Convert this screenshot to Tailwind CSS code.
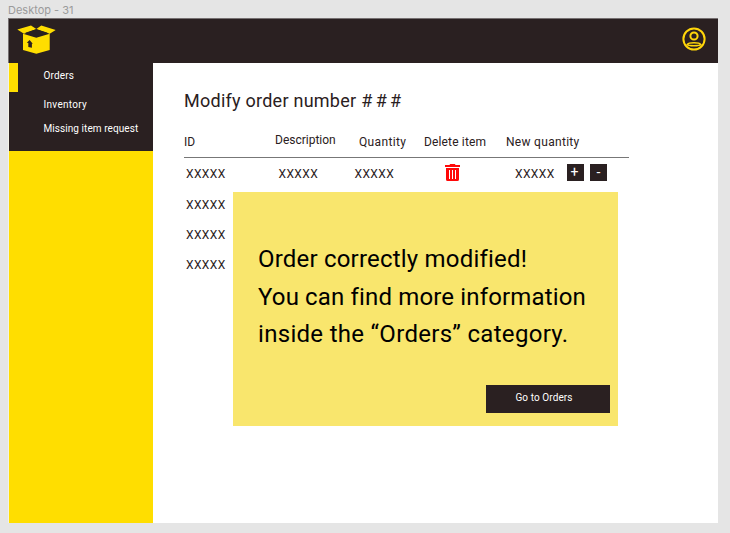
<!DOCTYPE html>
<html lang="en">
<head>
<meta charset="utf-8">
<title>Modify order</title>
<script src="https://cdn.jsdelivr.net/npm/@tailwindcss/browser@4"></script>
</head>
<body class="w-[730px] h-[533px] overflow-hidden bg-[#e5e5e5] pl-[8px] font-['Roboto','Liberation_Sans',sans-serif] text-[#2a2021]">
<div class="h-[18px] pt-[3px] text-[11px] leading-[14px] text-[#9b9b9b] font-['Inter',sans-serif]">Desktop - 31</div>
<div class="relative w-[710px] h-[505px] bg-white flex flex-col">
  <header class="h-[45px] shrink-0 bg-[#2a2021] border-t border-l border-[#767071] flex items-start justify-between pl-[8px] pr-[12px]">
    <svg class="w-[39px] h-[29px] mt-[6px]" viewBox="0 0 39 29">
      <path fill="#ffde00" d="M.3 4.6 14 .4 19.3 4 7 8.7ZM19.3 4 24.3.6 38.7 4.9 32.7 8.7ZM6 8.7 19.3 12.8 32.7 8.7V25L19.3 28.7 6 25Z"/>
      <path fill="#2a2021" d="M8.3 7.8 19.3 4.2 30.5 7.8 19.3 11.9Z"/>
      <path fill="#2a2021" d="M12.6 15 15.8 18.8 14.9 18.7V22.8L11.3 21.9V18L9.8 17.7Z"/>
    </svg>
    <svg class="w-[24px] h-[24px] mt-[8px]" viewBox="0 0 24 24" fill="none" stroke="#ffd60a" stroke-width="2">
      <circle cx="12" cy="12" r="10.6"/>
      <circle cx="12" cy="9" r="3.6"/>
      <path d="M5.2 17.6C6 16.3 8.6 15.8 12 15.8S18 16.3 18.8 17.6C17.5 19.2 6.5 19.2 5.2 17.6Z" stroke-width="1.6"/>
    </svg>
  </header>
  <div class="flex flex-1">
    <aside class="w-[145px] shrink-0 bg-[#ffde00] border-l border-[#f4f2e6]">
      <nav class="relative h-[87.5px] bg-[#2a2021] pl-[34.5px] pt-[5px] text-[10px] text-white">
        <div class="absolute left-0 top-0 w-[8.5px] h-[29px] bg-[#ffde00]"></div>
        <div class="h-[28.5px] leading-[16px] tracking-[0.15px]">Orders</div>
        <div class="h-[24px] leading-[16px] tracking-[0.3px]">Inventory</div>
        <div class="leading-[16px] tracking-[0.07px] whitespace-nowrap">Missing item request</div>
      </nav>
    </aside>
    <main class="pl-[31px] pt-[25px] w-[476px]">
      <h1 class="h-[42px] leading-[26px] text-[18px] tracking-[0.25px] whitespace-nowrap flex gap-[5px]"><span>Modify order number</span><span class="tracking-[3.2px]">###</span></h1>
      <div class="h-[28px] border-b border-[#777] grid grid-cols-[91px_84px_65px_82px_1fr] text-[12px] leading-[16px] pt-[4px] whitespace-nowrap">
        <span>ID</span><span class="-mt-[2px]">Description</span><span class="tracking-[0.35px]">Quantity</span><span class="tracking-[0.15px]">Delete item</span><span class="tracking-[0.3px]">New quantity</span>
      </div>
      <div class="h-[31px] flex items-center pl-[2px] text-[12px] tracking-[0.4px] whitespace-nowrap">
        <span class="w-[92.5px]">XXXXX</span><span class="w-[76px]">XXXXX</span><span class="w-[90.5px]">XXXXX</span>
        <svg class="w-[15px] h-[17px] -mt-[2px] mr-[56px]" viewBox="0 0 15 17">
          <path fill="#ff0808" d="M0 1H4.4L5.2 0H9.8L10.6 1H15V3H0ZM1 4H14V15.4Q14 17 12.4 17H2.6Q1 17 1 15.4Z"/>
          <path stroke="white" stroke-width="1" d="M4.5 6V15M7.5 6V15M10.5 6V15"/>
        </svg>
        <span class="w-[51px] pt-px -ml-px mr-px">XXXXX</span>
        <button class="w-[17px] h-[17px] -mt-[2px] bg-[#2a2021] text-white text-[14px] tracking-normal leading-[17px] mr-[6px] pr-[2px]">+</button>
        <button class="w-[17px] h-[17px] -mt-[2px] bg-[#2a2021] text-white text-[14px] tracking-normal leading-[17px]">-</button>
      </div>
      <div class="h-[30px] pt-[1px] flex items-center pl-[2px] text-[12px] tracking-[0.4px]">XXXXX</div>
      <div class="h-[30px] pt-[1px] flex items-center pl-[2px] text-[12px] tracking-[0.4px]">XXXXX</div>
      <div class="h-[31px] flex items-center pl-[2px] text-[12px] tracking-[0.4px]">XXXXX</div>
    </main>
  </div>
  <section class="absolute left-[225px] top-[174px] w-[385px] h-[234.4px] bg-[#f9e66d] pl-[25px] pr-[8.5px] pt-[49px] text-black flex flex-col">
    <div class="text-[24px] leading-[37.5px] h-[143.5px] whitespace-nowrap">
      <p class="tracking-[0.2px]">Order correctly modified!</p>
      <p class="tracking-[0.15px]">You can find more information</p>
      <p class="tracking-[0.3px]">inside the “Orders” category.</p>
    </div>
    <button class="self-end w-[124px] h-[28px] bg-[#2a2021] text-white text-[10px] pr-[7px] pb-[3px] tracking-[0.1px]">Go to Orders</button>
  </section>
</div>
</body>
</html>
